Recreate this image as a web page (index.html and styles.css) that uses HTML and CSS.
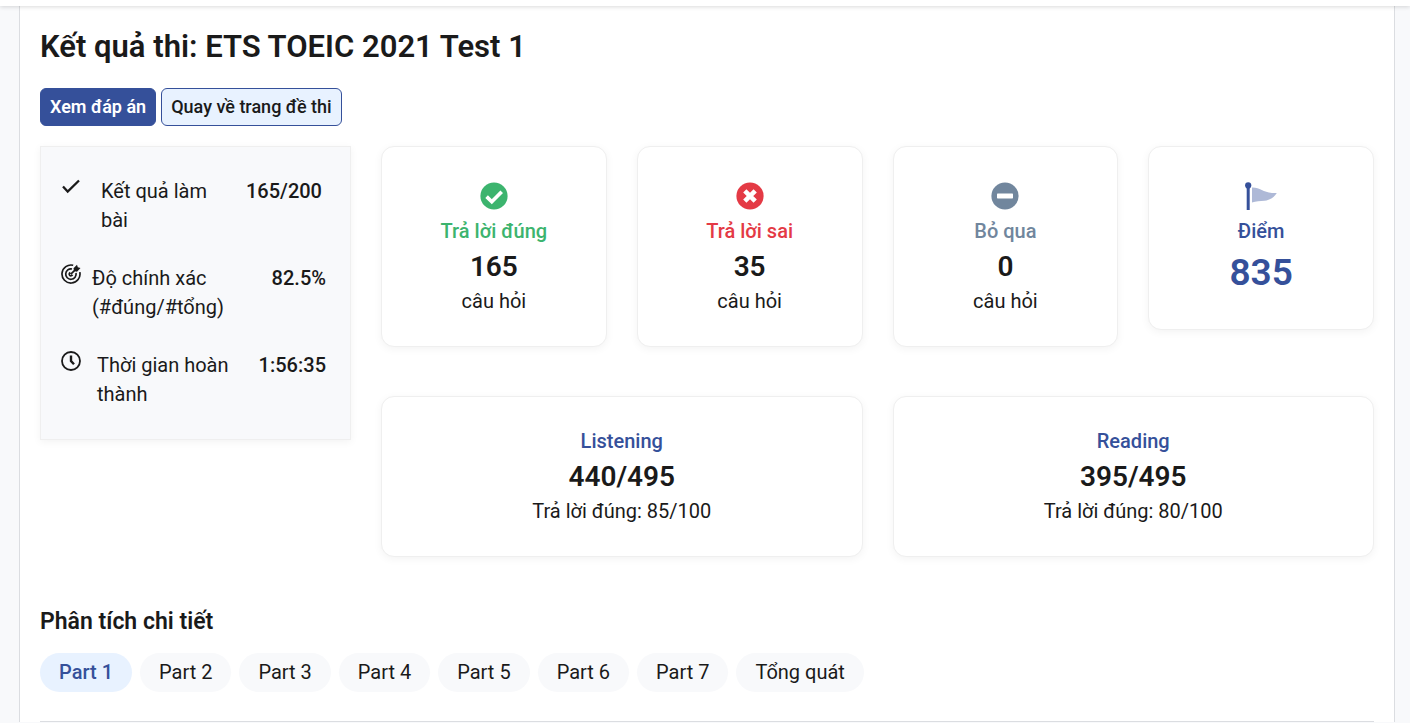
FILE: index.html
```html
<!DOCTYPE html>
<html lang="vi">
<head>
<meta charset="utf-8">
<meta name="viewport" content="width=device-width, initial-scale=1">
<title>Kết quả thi: ETS TOEIC 2021 Test 1</title>
<link rel="stylesheet" href="styles.css">
</head>
<body>
<header class="topbar"></header>
<main class="page">
  <h1 class="title">Kết quả thi: ETS TOEIC 2021 Test 1</h1>
  <div class="actions">
    <a class="btn btn-primary" href="#answers">Xem đáp án</a>
    <a class="btn btn-outline" href="#test">Quay về trang đề thi</a>
  </div>

  <section class="results">
    <div class="summary">
      <div class="summary-item summary-item-wide">
        <svg class="summary-icon" viewBox="0 0 20 20" aria-hidden="true"><path d="M2 9.500l4.700 5L18 3.500" fill="none" stroke="currentColor" stroke-width="2.300"/></svg>
        <span class="summary-label">Kết quả làm bài</span>
        <span class="summary-value">165/200</span>
      </div>
      <div class="summary-item summary-item-tight">
        <svg class="summary-icon" viewBox="0 0 20 20" aria-hidden="true">
          <g fill="none" stroke="currentColor" stroke-width="1.700">
            <path d="M12.200 1.300A9 9 0 1 0 18.800 8.200"/>
            <path d="M11 5A5.200 5.200 0 1 0 15 9"/>
            <path d="M9.300 8.500A1.700 1.700 0 1 0 11.500 10.700M9.800 10.200L15.800 4.400"/>
          </g>
          <path d="M12.500 4.300L16 .7l.8 2.500 2.700.9-3.500 3.600-3-.6z" fill="currentColor"/>
        </svg>
        <span class="summary-label">Độ chính xác (#đúng/#tổng)</span>
        <span class="summary-value">82.5%</span>
      </div>
      <div class="summary-item">
        <svg class="summary-icon" viewBox="0 0 20 20" aria-hidden="true"><circle cx="10" cy="10" r="9" fill="none" stroke="currentColor" stroke-width="1.800"/><path d="M10 4.500V10l3 3.300" fill="none" stroke="currentColor" stroke-width="2.400"/></svg>
        <span class="summary-label">Thời gian hoàn thành</span>
        <span class="summary-value">1:56:35</span>
      </div>
    </div>

    <div class="scores">
      <div class="card correct">
        <svg class="card-icon" viewBox="0 0 28 28" aria-hidden="true"><circle cx="14" cy="14" r="13.6" fill="currentColor"/><path d="M6.600 14.600l5.200 5.100 9.900-9.900" fill="none" stroke="#fff" stroke-width="3.700"/></svg>
        <div class="card-label">Trả lời đúng</div>
        <div class="card-number">165</div>
        <div>câu hỏi</div>
      </div>
      <div class="card wrong">
        <svg class="card-icon" viewBox="0 0 28 28" aria-hidden="true"><circle cx="14" cy="14" r="13.6" fill="currentColor"/><path d="M8.800 8.800l10.400 10.400M19.200 8.800L8.800 19.200" fill="none" stroke="#fff" stroke-width="4.600"/></svg>
        <div class="card-label">Trả lời sai</div>
        <div class="card-number">35</div>
        <div>câu hỏi</div>
      </div>
      <div class="card skipped">
        <svg class="card-icon" viewBox="0 0 28 28" aria-hidden="true"><circle cx="14" cy="14" r="13.6" fill="currentColor"/><rect x="6" y="11.6" width="16" height="4.8" rx=".7" fill="#fff"/></svg>
        <div class="card-label">Bỏ qua</div>
        <div class="card-number">0</div>
        <div>câu hỏi</div>
      </div>
      <div class="card score">
        <svg class="card-icon flag" viewBox="0 0 34 28" aria-hidden="true"><circle cx="4.200" cy="3.400" r="3.100" fill="currentColor"/><path d="M2.700 4h3v24h-3z" fill="currentColor"/><path d="M8 5.500C17 5.200 20 12 32.800 11c-3.800 5.400-7.500 7.300-12.200 7.800-4.600.6-8.600.3-12.600 1.700z" fill="#aeb9d7"/></svg>
        <div class="card-label">Điểm</div>
        <div class="card-total">835</div>
      </div>
      <div class="card card-wide">
        <div class="card-label">Listening</div>
        <div class="card-number">440/495</div>
        <div>Trả lời đúng: 85/100</div>
      </div>
      <div class="card card-wide">
        <div class="card-label">Reading</div>
        <div class="card-number">395/495</div>
        <div>Trả lời đúng: 80/100</div>
      </div>
    </div>
  </section>

  <section class="analysis">
    <h2 class="subtitle">Phân tích chi tiết</h2>
    <div class="tabs" role="tablist">
      <button class="tab tab-active" type="button" role="tab" aria-selected="true">Part 1</button>
      <button class="tab" type="button" role="tab">Part 2</button>
      <button class="tab" type="button" role="tab">Part 3</button>
      <button class="tab" type="button" role="tab">Part 4</button>
      <button class="tab" type="button" role="tab">Part 5</button>
      <button class="tab" type="button" role="tab">Part 6</button>
      <button class="tab" type="button" role="tab">Part 7</button>
      <button class="tab" type="button" role="tab">Tổng quát</button>
    </div>
    <hr class="divider">
  </section>
</main>
</body>
</html>
```
FILE: styles.css
```css
* { box-sizing: border-box; }

body {
  margin: 0;
  background: #f8f9fb;
  color: #1a1a1a;
  font: 400 20px/29px Roboto, "Noto Sans", sans-serif;
}

.topbar {
  position: relative;
  height: 6px;
  background: #fff;
  box-shadow: 0 1px 4px rgba(0, 0, 0, .15);
}

.page {
  margin: 0 15px 0 19px;
  padding: 23px 20px 0;
  background: #fff;
  border: solid #dbdde1;
  border-width: 0 1px;
}

.title {
  margin: 0 0 23px;
  font-size: 31px;
  line-height: 36px;
  font-weight: 600;
}

.actions { display: flex; gap: 5px; margin-bottom: 20px; }

.btn {
  padding: 5px 9px;
  border: 1px solid #35509a;
  border-radius: 6px;
  font-size: 18px;
  line-height: 26px;
  font-weight: 500;
  text-decoration: none;
}
.btn-primary { background: #35509a; color: #fff; font-weight: 600; }
.btn-outline { background: #e8f2ff; color: #1a1a1a; }

.results {
  display: grid;
  grid-template-columns: repeat(4, minmax(0, 1fr));
  gap: 30px;
}

.summary {
  align-self: start;
  display: grid;
  gap: 29px;
  padding: 30px 24px 30px 20px;
  background: #f8f9fb;
  border: 1px solid #efefef;
  box-shadow: 0 2px 8px rgba(0, 0, 0, .05);
}
.summary-item { display: flex; align-items: flex-start; gap: 16px; }
.summary-item-wide { gap: 20px; padding-right: 4px; }
.summary-item-tight { gap: 11px; }
.summary-icon { flex: none; width: 20px; height: 20px; }
.summary-label { flex: 0 1 136px; }
.summary-value { margin-left: auto; font-weight: 500; }

.scores {
  grid-column: span 3;
  display: grid;
  grid-template-columns: repeat(4, minmax(0, 1fr));
  gap: 49px 30px;
  align-items: start;
}

.card {
  padding: 30px 20px;
  background: #fff;
  border: 1px solid #efefef;
  border-radius: 13px;
  box-shadow: 0 2px 8px rgba(0, 0, 0, .05);
  text-align: center;
}
.card-wide { grid-column: span 2; }
.card-icon { display: block; width: 28px; height: 28px; margin: 5px auto 7px; color: #35509a; }
.flag { width: 34px; }
.card-label { color: #35509a; font-weight: 500; }
.card-number { font-size: 28px; line-height: 41px; font-weight: 600; }
.card-total { color: #35509a; font-size: 37px; line-height: 53px; font-weight: 600; }
.correct .card-icon, .correct .card-label { color: #3cb46e; }
.wrong .card-icon, .wrong .card-label { color: #e43a45; }
.skipped .card-icon, .skipped .card-label { color: #71869d; }

.analysis { padding-top: 51px; }
.subtitle { margin: 0 0 17px; font-size: 23px; line-height: 28px; font-weight: 600; }

.tabs { display: flex; flex-wrap: wrap; gap: 8px; }
.tab {
  padding: 5px 19px;
  border: 0;
  border-radius: 20px;
  background: #f8f9fb;
  color: #1a1a1a;
  font: inherit;
}
.tab-active { background: #e8f2ff; color: #35509a; font-weight: 500; }

.divider { margin: 29px 0 0; border: 0; border-top: 1px solid #dbdde1; }
```
